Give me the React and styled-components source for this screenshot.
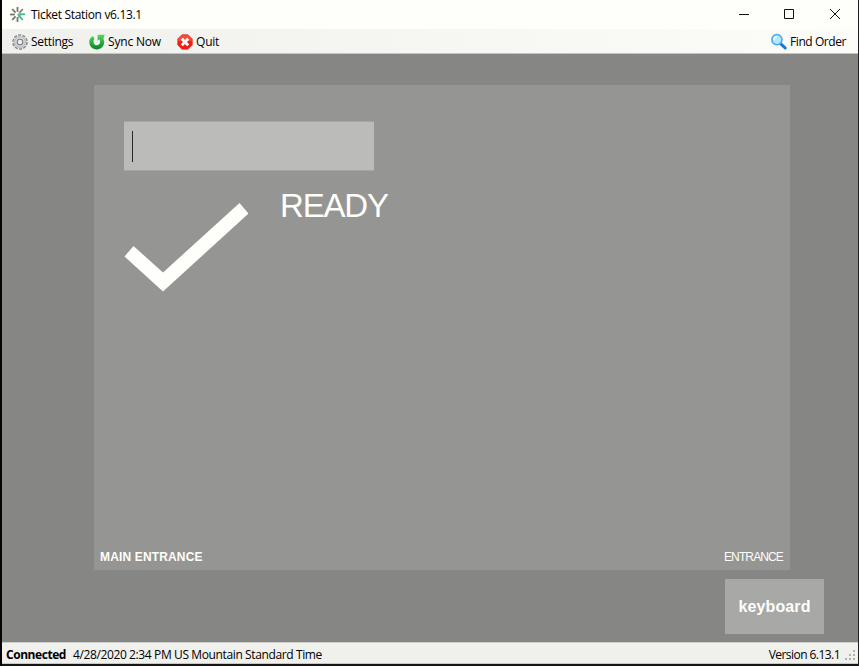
import React from 'react';
import styled, { createGlobalStyle } from 'styled-components';

const GlobalStyle = createGlobalStyle`
  * { box-sizing: border-box; }
  body { margin: 0; overflow: hidden; }
`;

const Window = styled.div`
  width: 859px;
  height: 666px;
  display: grid;
  grid-template-rows: 29px 25px 588px 22px;
  padding-bottom: 2px;
  border-left: 2px solid #050505;
  border-right: 1px solid #202020;
  background: #161616;
  color: #000;
  font: 12px/16px "Open Sans", "Noto Sans", sans-serif;
`;

const Label = styled.span`
  white-space: nowrap;
  letter-spacing: ${(p) => p.$tracking || 0}px;
  font-weight: ${(p) => (p.$bold ? 700 : 400)};
`;

const TitleBar = styled.header`
  display: flex;
  align-items: center;
  padding: 0 17px 0 7px;
  background: #fefefb;
`;

const Title = styled(Label)`
  margin-left: 5px;
  flex: 1;
`;

const WindowControls = styled.div`
  display: flex;
  gap: 34px;
  margin-bottom: 2px;
`;

const Toolbar = styled.nav`
  display: flex;
  align-items: flex-start;
  background: linear-gradient(90deg, #f0f1ed, #fcfcf9);
  border-bottom: 1px solid #c4c4c1;
  padding: 4px 11px 0 10px;
`;

const ToolButton = styled.div`
  display: flex;
  align-items: center;
  gap: 3px;
  height: 17px;
  width: ${(p) => p.$width}px;
  margin-left: ${(p) => (p.$end ? 'auto' : 0)};
`;

const Workspace = styled.main`
  background: #868684;
  padding: 31px 34px 0 92px;
  display: flex;
  flex-direction: column;
`;

const Panel = styled.section`
  width: 696px;
  height: 485px;
  padding: 36px 7px 5px 6px;
  background: #959593;
  color: #fefefb;
  font-family: "Liberation Sans", Arial, sans-serif;
  display: flex;
  flex-direction: column;
`;

const ScanField = styled.div`
  width: 250px;
  height: 50px;
  margin-left: 24px;
  padding: 9px 8px 8px;
  background: #bbbbb9;
  border-top: 1px solid #a5a5a3;
  border-bottom: 1px solid #a5a5a3;
`;

const Caret = styled.div`
  width: 1px;
  height: 31px;
  background: #292929;
`;

const Status = styled.div`
  display: flex;
  flex: 1;
  padding: 32px 0 0 24px;
`;

const StatusText = styled.div`
  font-size: 33px;
  line-height: 38px;
  margin: -16px 0 0 32px;
  letter-spacing: ${(p) => p.$tracking}px;
`;

const PanelFooter = styled.footer`
  display: flex;
  justify-content: space-between;
`;

const KeyboardButton = styled.div`
  width: 99px;
  height: 55px;
  margin-top: 9px;
  align-self: flex-end;
  display: flex;
  align-items: center;
  justify-content: center;
  background: #a8a8a6;
  color: #fefefb;
  font: bold 16px "Liberation Sans", Arial, sans-serif;
  letter-spacing: 0.12px;
`;

const StatusBar = styled.footer`
  display: flex;
  align-items: center;
  padding: 4px 3px 0 4px;
  background: #f0f0ed;
  border-top: 1px solid #d0d0cd;
  border-bottom: 1px solid #c8c8c5;
`;

const Spacer = styled.div`
  width: ${(p) => (p.$width ? `${p.$width}px` : 'auto')};
  flex: ${(p) => (p.$width ? 'none' : 1)};
`;

function BurstIcon() {
  const rays = [
    ['#777469', 'M8 1v4.5'], ['#85817a', 'M13 3 9.8 6.2'], ['#777469', 'M8 10.5V15'],
    ['#777469', 'M6.2 9.8 3 13'], ['#777469', 'M5.5 8H1'], ['#777469', 'M3 3l3.2 3.2'],
    ['#45b78c', 'M8.5 7.8H15'], ['#45b78c', 'M8.5 8.5 13 13'],
  ];
  return (
    <svg width="17" height="17" viewBox="0 0 16 16" fill="none" strokeWidth="1.7">
      {rays.map(([color, d]) => <path key={d} stroke={color} d={d} />)}
      <path d="M8 7h4l-1.5 3.5L9 11.5z" fill="#58bf98" />
    </svg>
  );
}

function GearIcon() {
  return (
    <svg width="16" height="16" viewBox="0 0 16 16" fill="none">
      <circle cx="8" cy="8" r="6.7" stroke="#84898c" strokeWidth="2.2" strokeDasharray="3 1.21" />
      <circle cx="8" cy="8" r="4.8" stroke="#d8dada" strokeWidth="3.2" />
      <circle cx="8" cy="8" r="5.3" stroke="#a4a8aa" strokeWidth=".7" />
      <circle cx="8" cy="8" r="2.8" stroke="#777c80" strokeWidth="1.1" />
    </svg>
  );
}

function SyncIcon() {
  return (
    <svg width="16" height="16" viewBox="0 0 16 16">
      <defs>
        <linearGradient id="green" x2="0" y2="1">
          <stop stopColor="#60cf70" /><stop offset=".55" stopColor="#25ad3b" /><stop offset="1" stopColor="#07832a" />
        </linearGradient>
      </defs>
      <path fill="url(#green)" d="M3.8 1.9C1.6 3.2.3 5.4.3 8.1c0 4.1 3.2 7.4 7.4 7.4s7.5-3.3 7.5-7.4c0-1.2-.3-2.3-.8-3.3L15.7.7H8.6v6l1.7-1.4c.5.7.8 1.5.8 2.4 0 2-1.5 3.5-3.4 3.5S4.5 9.7 4.5 7.7c0-1.1.3-2.2.9-3z" />
    </svg>
  );
}

function QuitIcon() {
  return (
    <svg width="16" height="16" viewBox="0 0 16 16">
      <path fill="#f31b12" stroke="#dc3b2d" strokeWidth=".7" d="M5 .7h6L15.3 5v6L11 15.3H5L.7 11V5z" />
      <path d="M5 1.3h6L14.6 5v2.6c-4-1.5-9-1.5-13.2 0V5z" fill="#ff6555" opacity=".65" />
      <path d="m4.8 4.8 6.4 6.4m0-6.4-6.4 6.4" stroke="#fff" strokeWidth="2.9" />
    </svg>
  );
}

function SearchIcon() {
  return (
    <svg width="17" height="17" viewBox="0 0 17 17">
      <path d="m10.8 10.8 4.4 4.2" stroke="#147ccc" strokeWidth="3" strokeLinecap="round" />
      <circle cx="6.9" cy="6.6" r="5.1" fill="#b2e5ff" stroke="#48a7e5" strokeWidth="1.5" />
      <path d="M3.9 6.8c.2-1.8 1.3-2.8 3.1-3" fill="none" stroke="#edfaff" strokeWidth="1.6" />
    </svg>
  );
}

function ControlIcon({ path }) {
  return (
    <svg width="12" height="12" viewBox="0 0 12 12">
      <path d={path} fill="none" stroke="#111" />
    </svg>
  );
}

function CheckIcon() {
  return (
    <svg width="124" height="90" viewBox="0 0 124 90">
      <path d="M.5 53.5 9.5 43 39 69.5 115.5 0l9 10.5L39 88.5z" fill="#fefefb" />
    </svg>
  );
}

function GripIcon() {
  const dots = [[8, 0], [4, 4], [8, 4], [0, 8], [4, 8], [8, 8]];
  return (
    <svg width="10" height="10">
      {dots.map(([x, y]) => <rect key={`${x}-${y}`} x={x} y={y} width="2" height="2" fill="#b2b2af" />)}
    </svg>
  );
}

export default function App() {
  return (
    <>
      <GlobalStyle />
      <Window>
        <TitleBar>
          <BurstIcon />
          <Title $tracking={-0.33}>Ticket Station v6.13.1</Title>
          <WindowControls>
            <ControlIcon path="M2 6.5h10" />
            <ControlIcon path="M1.5 1.5h9v9h-9z" />
            <ControlIcon path="m1 1 10 10M11 1 1 11" />
          </WindowControls>
        </TitleBar>
        <Toolbar>
          <ToolButton $width={77}><GearIcon /><Label $tracking={-0.3}>Settings</Label></ToolButton>
          <ToolButton $width={88}><SyncIcon /><Label $tracking={-0.18}>Sync Now</Label></ToolButton>
          <ToolButton $width={50}><QuitIcon /><Label $tracking={-0.2}>Quit</Label></ToolButton>
          <ToolButton $width={77} $end><SearchIcon /><Label $tracking={-0.42}>Find Order</Label></ToolButton>
        </Toolbar>
        <Workspace>
          <Panel>
            <ScanField><Caret /></ScanField>
            <Status>
              <CheckIcon />
              <StatusText $tracking={-1.2}>READY</StatusText>
            </Status>
            <PanelFooter>
              <Label $bold $tracking={0.15}>MAIN ENTRANCE</Label>
              <Label $tracking={-0.87}>ENTRANCE</Label>
            </PanelFooter>
          </Panel>
          <KeyboardButton>keyboard</KeyboardButton>
        </Workspace>
        <StatusBar>
          <Label $bold $tracking={-0.45}>Connected</Label>
          <Spacer $width={7} />
          <Label $tracking={-0.38}>4/28/2020 2:34 PM US Mountain Standard Time</Label>
          <Spacer />
          <Label $tracking={-0.55}>Version 6.13.1</Label>
          <Spacer $width={5} />
          <GripIcon />
        </StatusBar>
      </Window>
    </>
  );
}
